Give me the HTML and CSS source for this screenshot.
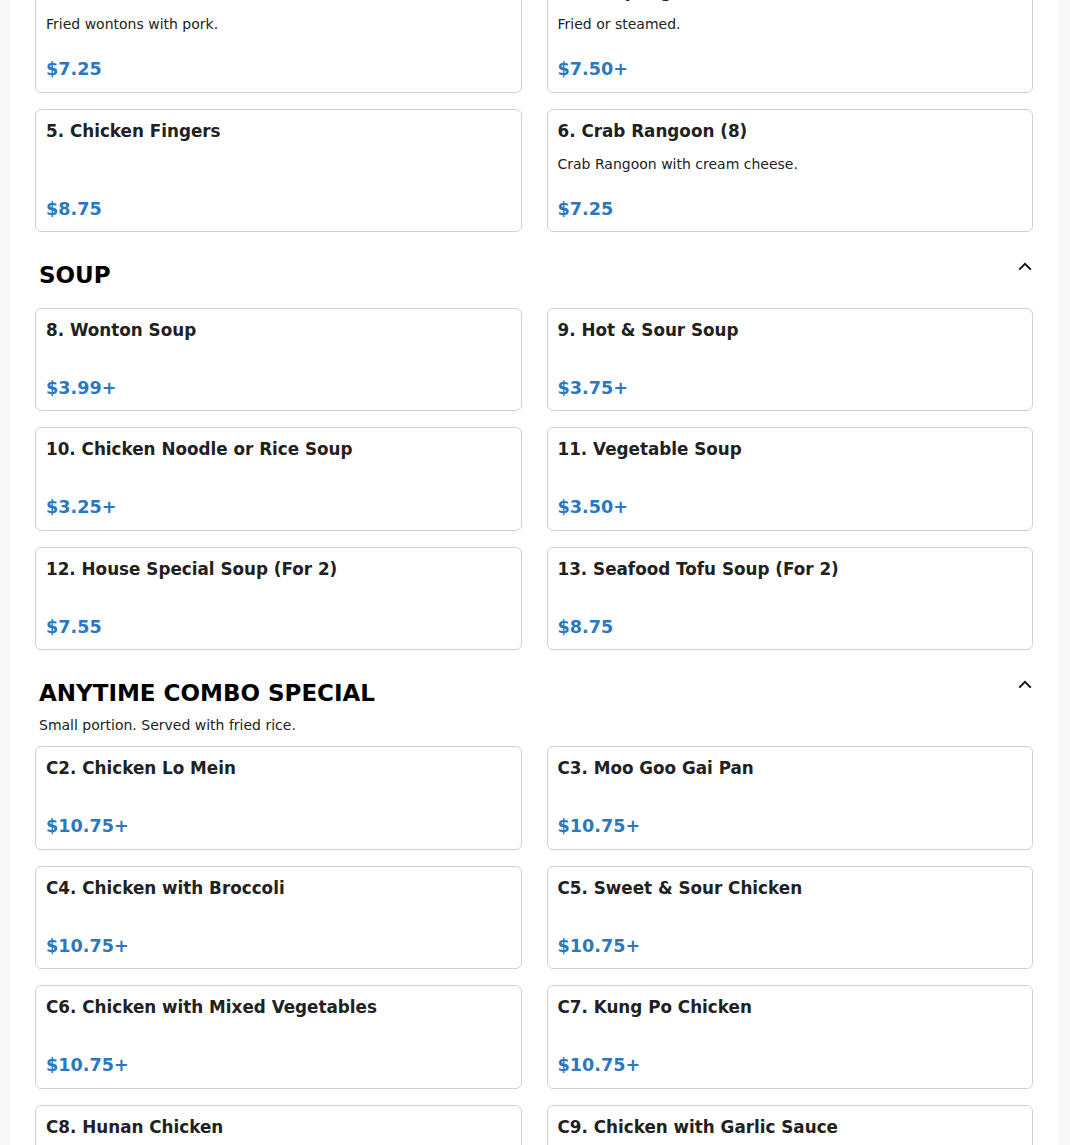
FILE: index.html
```html
<!DOCTYPE html>
<html lang="en">
<head>
<meta charset="utf-8">
<title>Menu</title>
<link rel="stylesheet" href="styles.css">
</head>
<body>
<main class="page">
  <section class="section section-first">
    <div class="grid">
      <div class="card">
        <div class="item-title">3. Fried Wonton (10)</div>
        <div class="item-desc">Fried wontons with pork.</div>
        <div class="item-price">$7.25</div>
      </div>
      <div class="card">
        <div class="item-title">4. Dumplings (8)</div>
        <div class="item-desc">Fried or steamed.</div>
        <div class="item-price">$7.50+</div>
      </div>
      <div class="card">
        <div class="item-title">5. Chicken Fingers</div>
        <div class="item-price">$8.75</div>
      </div>
      <div class="card">
        <div class="item-title">6. Crab Rangoon (8)</div>
        <div class="item-desc">Crab Rangoon with cream cheese.</div>
        <div class="item-price">$7.25</div>
      </div>
    </div>
  </section>

  <section class="section">
    <header class="section-head">
      <h2 class="section-title">SOUP</h2>
      <button class="toggle" aria-label="Collapse">
        <svg width="14" height="14" viewBox="0 0 14 14"><polyline points="1.2,9.6 7,3.8 12.8,9.6" fill="none" stroke="#111" stroke-width="1.9"/></svg>
      </button>
    </header>
    <div class="grid">
      <div class="card"><div class="item-title">8. Wonton Soup</div><div class="item-price">$3.99+</div></div>
      <div class="card"><div class="item-title">9. Hot &amp; Sour Soup</div><div class="item-price">$3.75+</div></div>
      <div class="card"><div class="item-title">10. Chicken Noodle or Rice Soup</div><div class="item-price">$3.25+</div></div>
      <div class="card"><div class="item-title">11. Vegetable Soup</div><div class="item-price">$3.50+</div></div>
      <div class="card"><div class="item-title">12. House Special Soup (For 2)</div><div class="item-price">$7.55</div></div>
      <div class="card"><div class="item-title">13. Seafood Tofu Soup (For 2)</div><div class="item-price">$8.75</div></div>
    </div>
  </section>

  <section class="section">
    <header class="section-head">
      <div class="head-text">
        <h2 class="section-title">ANYTIME COMBO SPECIAL</h2>
        <p class="section-sub">Small portion. Served with fried rice.</p>
      </div>
      <button class="toggle" aria-label="Collapse">
        <svg width="14" height="14" viewBox="0 0 14 14"><polyline points="1.2,9.6 7,3.8 12.8,9.6" fill="none" stroke="#111" stroke-width="1.9"/></svg>
      </button>
    </header>
    <div class="grid">
      <div class="card"><div class="item-title">C2. Chicken Lo Mein</div><div class="item-price">$10.75+</div></div>
      <div class="card"><div class="item-title">C3. Moo Goo Gai Pan</div><div class="item-price">$10.75+</div></div>
      <div class="card"><div class="item-title">C4. Chicken with Broccoli</div><div class="item-price">$10.75+</div></div>
      <div class="card"><div class="item-title">C5. Sweet &amp; Sour Chicken</div><div class="item-price">$10.75+</div></div>
      <div class="card"><div class="item-title">C6. Chicken with Mixed Vegetables</div><div class="item-price">$10.75+</div></div>
      <div class="card"><div class="item-title">C7. Kung Po Chicken</div><div class="item-price">$10.75+</div></div>
      <div class="card"><div class="item-title">C8. Hunan Chicken</div><div class="item-price">$10.75+</div></div>
      <div class="card"><div class="item-title">C9. Chicken with Garlic Sauce</div><div class="item-price">$10.75+</div></div>
    </div>
  </section>
</main>
</body>
</html>
```

FILE: styles.css
```css
html, body {
  margin: 0;
  padding: 0;
}
body {
  background: #f8f8f9;
  font-family: "DejaVu Sans", Verdana, sans-serif;
  color: #212529;
  overflow: hidden;
  height: 1145px;
}
.page {
  background: #ffffff;
  margin-left: 10px;
  width: 1048px;
  padding: 0 25px 40px;
  box-sizing: border-box;
  min-height: 1145px;
}
.section {
  margin-top: 30px;
}
.section-first {
  margin-top: -31px;
}
.section-head {
  display: flex;
  justify-content: space-between;
  align-items: flex-start;
  padding: 0 1px 0 4px;
  margin-bottom: 10px;
}
.section-title {
  margin: 0 0 8px;
  font-size: 23px;
  line-height: 1.2;
  font-weight: bold;
  color: #000;
}
.section-sub {
  margin: -1px 0 0;
  font-size: 14px;
  line-height: 1.5;
  color: #222;
}
.toggle {
  border: 0;
  background: transparent;
  padding: 0;
  margin: -2px 0 0;
  width: 14px;
  height: 14px;
  display: block;
  cursor: pointer;
}
.toggle svg {
  display: block;
}
.grid {
  display: grid;
  grid-template-columns: 1fr 1fr;
  column-gap: 25px;
  row-gap: 16px;
}
.card {
  border: 1px solid #d2d2d2;
  border-radius: 6px;
  padding: 11px 10px 8px;
  display: flex;
  flex-direction: column;
  background: #fff;
}
.item-title {
  font-size: 16.8px;
  line-height: 1.2;
  font-weight: bold;
  color: #212121;
  margin-bottom: 14px;
}
.item-desc {
  font-size: 14px;
  line-height: 1.5;
  color: #222;
  margin: -1px 0 0;
}
.item-price {
  margin-top: auto;
  padding-top: 20px;
  font-size: 17.6px;
  line-height: 28.4px;
  font-weight: bold;
  color: #2b78c2;
}
```
